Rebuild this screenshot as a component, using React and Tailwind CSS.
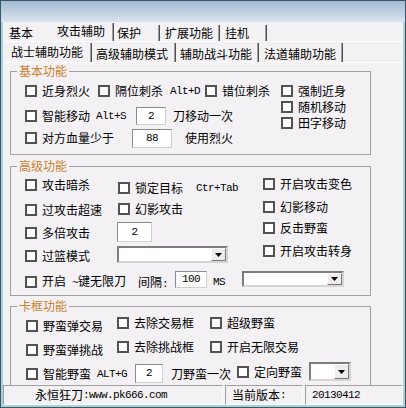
import React from "react";

const mono = "font-['Liberation_Mono',monospace] text-[11px] tracking-[-0.6px]";

function Box() {
  return <span className="block w-[12px] h-[12px] shrink-0 border-2 border-[#525252] bg-white" />;
}

function Cb({ label, className = "" }) {
  return (
    <div className={"flex items-center h-[16px] shrink-0 " + className}>
      <Box />
      <span className="ml-[5px] leading-[16px] whitespace-nowrap">{label}</span>
    </div>
  );
}

function Field({ value, className = "" }) {
  return (
    <div
      className={
        "flex items-center justify-center bg-white border border-t-[#8a8a8a] border-l-[#8a8a8a] border-r-[#cfcfcf] border-b-[#cfcfcf] shrink-0 " +
        className
      }
    >
      <span className={mono + " leading-none"}>{value}</span>
    </div>
  );
}

function Select({ className = "" }) {
  return (
    <div
      className={
        "flex justify-end items-stretch bg-white border-2 border-t-[#7c7c7c] border-l-[#7c7c7c] border-r-[#d8d4d4] border-b-[#d8d4d4] shrink-0 " +
        className
      }
    >
      <div className="w-[15px] flex items-center justify-center bg-[#eeebea] border border-t-white border-l-white border-r-[#7a7a7a] border-b-[#7a7a7a]">
        <svg width="7" height="4" viewBox="0 0 7 4">
          <path d="M0 0H7L3.5 4Z" fill="#000" />
        </svg>
      </div>
    </div>
  );
}

function Group({ title, className = "", children }) {
  return (
    <div className={"relative w-[361px] border border-[#a3a0a3] shrink-0 " + className}>
      <span className="absolute left-[6px] top-[-9px] px-[2px] leading-[16px] bg-[#f4f1f4] text-[#c88230] whitespace-nowrap">
        {title}
      </span>
      {children}
    </div>
  );
}

function Tab({ className, textClass, sepClass, label }) {
  return (
    <div className={"flex h-full shrink-0 " + className}>
      <div className={"flex-1 leading-[16px] whitespace-nowrap " + textClass}>{label}</div>
      {sepClass && (
        <div className={"flex " + sepClass}>
          <div className="w-px bg-[#a0a0a0]" />
          <div className="w-px bg-[#4f4f4f]" />
        </div>
      )}
    </div>
  );
}

function Panel({ className, children }) {
  return (
    <div
      className={
        "flex items-center h-full shrink-0 border border-t-[#a0a0a0] border-l-[#a0a0a0] border-r-white border-b-white whitespace-nowrap " +
        className
      }
    >
      {children}
    </div>
  );
}

export default function App() {
  return (
    <div className="w-[406px] h-[408px] border border-[#36586b] flex flex-col bg-[#f4f1f4] text-black text-[12px] font-['Noto_Sans_CJK_SC',sans-serif] overflow-hidden">
      <div className="h-[21px] shrink-0 bg-linear-to-b from-[#a3bad3] to-[#dbe4ef]" />
      <div className="flex-1 flex flex-col border-x-2 border-b-2 border-[#a8d2d8]">
        {/* tab row 1 */}
        <div className="h-[19px] flex shrink-0">
          <Tab className="w-[49px] pl-[6px]" textClass="pt-[3px]" label="基本" />
          <Tab className="w-[62px] pl-[5px]" textClass="pt-[1px]" sepClass="mt-[1px]" label="攻击辅助" />
          <Tab className="w-[46px] pl-[3px]" textClass="pt-[3px]" sepClass="mt-[3px]" label="保护" />
          <Tab className="w-[60px] pl-[5px]" textClass="pt-[3px]" sepClass="mt-[3px]" label="扩展功能" />
          <Tab className="w-[47px] pl-[5px]" textClass="pt-[3px]" sepClass="mt-[3px]" label="挂机" />
        </div>
        {/* tab row 2 */}
        <div className="h-[21px] flex shrink-0 border-t border-white">
          <Tab className="w-[89px] pl-[8px]" textClass="pt-[2px]" sepClass="mt-[1px]" label="战士辅助功能" />
          <Tab className="w-[84px] pl-[4px]" textClass="pt-[4px]" sepClass="mt-[1px]" label="高级辅助模式" />
          <Tab className="w-[83px] pl-[4px]" textClass="pt-[4px]" sepClass="mt-[1px]" label="辅助战斗功能" />
          <Tab className="w-[84px] pl-[5px]" textClass="pt-[4px]" sepClass="mt-[1px]" label="法道辅助功能" />
        </div>
        {/* tab page */}
        <div className="h-[323px] shrink-0 overflow-hidden border-t border-white flex flex-col pl-[7px] pt-[8px]">
          <Group title="基本功能" className="h-[84px]">
            <div className="flex pt-[11px] pl-[14px]">
              <div className="w-[256px] flex flex-col shrink-0">
                <div className="flex h-[16px]">
                  <Cb label="近身烈火" className="w-[73px]" />
                  <div className="w-[107px] flex items-center shrink-0">
                    <Cb label="隔位刺杀" />
                    <span className={mono + " ml-[7px] leading-[16px]"}>Alt+D</span>
                  </div>
                  <Cb label="错位刺杀" />
                </div>
                <div className="flex items-center h-[20px] mt-[7px]">
                  <Cb label="智能移动" />
                  <span className={mono + " ml-[6px] leading-[16px]"}>Alt+S</span>
                  <Field value="2" className="w-[30px] h-[18px] ml-[10px]" />
                  <span className="ml-[7px] leading-[16px]">刀移动一次</span>
                </div>
                <div className="flex items-center h-[20px] mt-[2px]">
                  <Cb label="对方血量少于" />
                  <Field value="88" className="w-[40px] h-[19px] ml-[18px]" />
                  <span className="ml-[13px] leading-[16px]">使用烈火</span>
                </div>
              </div>
              <div className="flex flex-col">
                <Cb label="强制近身" />
                <Cb label="随机移动" />
                <Cb label="田字移动" />
              </div>
            </div>
          </Group>

          <Group title="高级功能" className="h-[130px] mt-[11px]">
            <div className="pt-[9px] pl-[14px] flex flex-col">
              <div className="flex items-start">
                <div className="w-[93px] pt-[1px] flex flex-col shrink-0">
                  <Cb label="攻击暗杀" />
                  <Cb label="过攻击超速" className="mt-[9px]" />
                  <Cb label="多倍攻击" className="mt-[7px]" />
                  <Cb label="过篮模式" className="mt-[7px]" />
                </div>
                <div className="w-[145px] pt-[4px] flex flex-col items-start shrink-0">
                  <div className="flex items-center h-[16px]">
                    <Cb label="锁定目标" />
                    <span className={mono + " ml-[13px] leading-[16px]"}>Ctr+Tab</span>
                  </div>
                  <Cb label="幻影攻击" className="mt-[5px]" />
                  <Field value="2" className="w-[35px] h-[20px] mt-[5px] ml-[-1px]" />
                  <Select className="w-[111px] h-[17px] mt-[4px] ml-[-1px]" />
                </div>
                <div className="flex flex-col">
                  <Cb label="开启攻击变色" />
                  <Cb label="幻影移动" className="mt-[7px]" />
                  <Cb label="反击野蛮" className="mt-[5px]" />
                  <Cb label="开启攻击转身" className="mt-[7px]" />
                </div>
              </div>
              <div className="flex items-start mt-[7px] h-[20px]">
                <div className="flex items-center h-[16px] mt-[3px] shrink-0">
                  <Box />
                  <span className="ml-[5px] leading-[16px] whitespace-nowrap">
                    开启<span className={mono}> ~</span>键无限刀
                  </span>
                </div>
                <span className="ml-[12px] mt-[3px] leading-[16px] whitespace-nowrap">
                  间隔<span className={mono}>:</span>
                </span>
                <Field value="100" className="w-[32px] h-[17px] ml-[7px]" />
                <span className={mono + " ml-[6px] mt-[3px] leading-[16px]"}>MS</span>
                <Select className="w-[102px] h-[16px] ml-[17px]" />
              </div>
            </div>
          </Group>

          <Group title="卡框功能" className="h-[90px] mt-[10px]">
            <div className="pt-[8px] pl-[15px] flex flex-col">
              <div className="flex items-start">
                <div className="w-[91px] pt-[3px] flex flex-col shrink-0">
                  <Cb label="野蛮弹交易" />
                  <Cb label="野蛮弹挑战" className="mt-[8px]" />
                </div>
                <div className="w-[93px] flex flex-col shrink-0">
                  <Cb label="去除交易框" />
                  <Cb label="去除挑战框" className="mt-[8px]" />
                </div>
                <div className="flex flex-col">
                  <Cb label="超级野蛮" />
                  <Cb label="开启无限交易" className="mt-[8px]" />
                </div>
              </div>
              <div className="flex items-start mt-[4px]">
                <Cb label="智能野蛮" className="mt-[4px]" />
                <span className={mono + " ml-[6px] mt-[4px] leading-[16px]"}>ALT+G</span>
                <Field value="2" className="w-[28px] h-[19px] ml-[8px] mt-[2px]" />
                <span className="ml-[8px] mt-[4px] leading-[16px] whitespace-nowrap">刀野蛮一次</span>
                <Cb label="定向野蛮" className="ml-[6px] mt-[2px]" />
                <Select className="w-[42px] h-[19px] ml-[7px]" />
              </div>
            </div>
          </Group>
        </div>
        {/* status bar */}
        <div className="h-[20px] flex shrink-0">
          <Panel className="w-[220px] pl-[31px]">
            永恒狂刀<span className={mono}>:www.pk666.com</span>
          </Panel>
          <Panel className="w-[78px] ml-[2px] pl-[6px]">
            当前版本<span className={mono}>:</span>
          </Panel>
          <Panel className="w-[98px] ml-[2px] pl-[6px]">
            <span className={mono}>20130412</span>
          </Panel>
        </div>
      </div>
    </div>
  );
}
